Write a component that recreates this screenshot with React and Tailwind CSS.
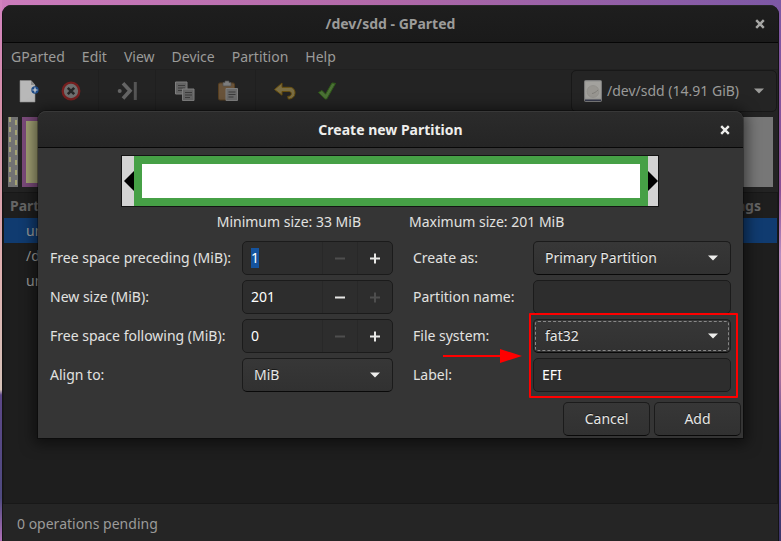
import { useEffect, useRef } from "react";

function CloseIcon() {
  return (
    <svg width="10" height="10" viewBox="0 0 10 10" fill="none" stroke="currentColor" strokeWidth="2.4">
      <path d="M1.2 1.2 8.8 8.8M8.8 1.2 1.2 8.8" />
    </svg>
  );
}

function Caret() {
  return (
    <svg width="10" height="6" viewBox="0 0 10 6" fill="currentColor">
      <path d="M0 0.5h10L5 5.5z" />
    </svg>
  );
}

function NewIcon() {
  return (
    <svg width="24" height="24" viewBox="0 0 24 24">
      <path d="M4 1.5h11l4 4.500V23H4z" fill="#b8b8b8" stroke="#8f8f8f" strokeWidth="0.6" />
      <path d="M15 1.500v4.500h4z" fill="#8d8d8d" />
      <circle cx="19" cy="11" r="3.700" fill="#1d4a86" />
      <path d="M19 8.500v5M16.500 11h5" stroke="#d5d5d5" strokeWidth="1.200" />
    </svg>
  );
}

function DeleteIcon() {
  return (
    <svg width="24" height="24" viewBox="0 0 24 24">
      <circle cx="12" cy="12" r="8.300" fill="#6f6f6f" stroke="#761f1f" strokeWidth="2.300" />
      <path d="M8.800 8.800l6.400 6.400M15.200 8.800l-6.400 6.400" stroke="#262626" strokeWidth="2.600" />
    </svg>
  );
}

function ResizeIcon() {
  return (
    <svg width="24" height="24" viewBox="0 0 24 24">
      <circle cx="3.700" cy="12" r="2" fill="#646464" />
      <path d="M7 4.200 14 11.800 7 19.500" fill="none" stroke="#646464" strokeWidth="3.600" />
      <path d="M19.300 3v18" stroke="#555" strokeWidth="3" />
    </svg>
  );
}

function CopyIcon() {
  return (
    <svg width="24" height="24" viewBox="0 0 24 24">
      <path d="M2.500 3h11.500v12H2.500z" fill="#646464" stroke="#7e7e7e" />
      <path d="M5 6.500h7M5 9h7M5 11.500h5" stroke="#3b3b3b" />
      <path d="M9.500 10h11.500v11.500H9.500z" fill="#646464" stroke="#7e7e7e" />
      <path d="M12 13.500h7M12 16h7M12 18.500h5" stroke="#3b3b3b" />
    </svg>
  );
}

function PasteIcon() {
  return (
    <svg width="24" height="24" viewBox="0 0 24 24">
      <rect x="2.500" y="4" width="16" height="17" rx="1.500" fill="#69533a" stroke="#573f20" />
      <path d="M7 3.500h2V2h4v1.500h2V7H7z" fill="#7d7d7d" stroke="#505050" strokeWidth="0.700" />
      <path d="M10 9.500h11.500v12H10z" fill="#6b6b6b" stroke="#7e7e7e" />
      <path d="M12.500 13h7M12.500 15.500h7M12.500 18h5" stroke="#3b3b3b" />
    </svg>
  );
}

function UndoIcon() {
  return (
    <svg width="24" height="24" viewBox="0 0 24 24">
      <path
        d="M1.500 10.500 9 4v4.300h7.500c3.700 0 5.700 2.700 5.500 6-.2 3.200-2.300 5.200-5.500 5.700h-1.200l-.6-2.600c2.300 0 3.600-.9 3.600-2.700 0-1.500-1-2.200-2.600-2.200H9v3.700z"
        fill="#7a6d43"
        stroke="#664d0c"
      />
    </svg>
  );
}

function ApplyIcon() {
  return (
    <svg width="24" height="24" viewBox="0 0 24 24">
      <path d="M2.500 13.500 6 11.500l3.600 3.700L16 4l3.500.4L10.700 20H9.200z" fill="#4b7136" stroke="#2f5a18" />
    </svg>
  );
}

function DiskIcon() {
  return (
    <svg width="18" height="22" viewBox="0 0 18 22">
      <rect x="0.500" y="0.500" width="17" height="21" rx="1" fill="#989895" stroke="#7b7b7b" />
      <path d="M1 19.500h16V21H1z" fill="#35384a" />
      <path d="M1.500 18.500V2h15v16.500z" fill="#a3a29e" />
      <circle cx="9" cy="11.500" r="6" fill="#989691" stroke="#8d8b86" strokeWidth="0.600" />
      <path d="M8 13.500c2-.2 4-1.500 6-3.500" stroke="#807e79" fill="none" />
    </svg>
  );
}

const tools = [
  [["New", NewIcon], ["Delete", DeleteIcon]],
  [["Resize/Move", ResizeIcon]],
  [["Copy", CopyIcon], ["Paste", PasteIcon]],
  [["Undo", UndoIcon], ["Apply", ApplyIcon]],
];

const raised =
  "rounded-[5px] border border-[#1b1b1b] border-b-[#090909] bg-linear-to-b from-[#373737] to-[#313131] text-[#e6e6e4] [text-shadow:0_-1px_#181818]";

function SpinRow({ id, label, value, canLower, canRaise, selected }) {
  const ref = useRef(null);
  useEffect(() => {
    if (selected) {
      ref.current.focus();
      ref.current.select();
    }
  }, [selected]);
  return (
    <>
      <label htmlFor={id}>{label}</label>
      <div className="flex h-[34px] overflow-hidden rounded-[5px] border border-[#1b1b1b] bg-[#2d2d2d]">
        <input
          ref={ref}
          id={id}
          defaultValue={value}
          className="w-0 flex-1 bg-transparent px-2 text-white outline-none selection:bg-[#15539e] selection:text-white"
        />
        {[["Decrease", canLower, "M0 5.500h10"], ["Increase", canRaise, "M0 5.500h10M5 0.500v10"]].map(([name, on, d]) => (
          <button
            key={name}
            aria-label={`${name} ${label}`}
            disabled={!on}
            className="grid w-[35px] place-items-center border-l border-[#282828] text-[#e8e8e6] disabled:text-[#4e4e4e]"
          >
            <svg width="10" height="11" viewBox="0 0 10 11" fill="none" stroke="currentColor" strokeWidth="2">
              <path d={d} />
            </svg>
          </button>
        ))}
      </div>
    </>
  );
}

function SelectRow({ id, label, value, focused }) {
  return (
    <>
      <label htmlFor={id}>{label}</label>
      <div className="relative">
        <select id={id} defaultValue={value} className={`h-[34px] w-full appearance-none px-[11px] outline-none ${raised}`}>
          <option>{value}</option>
        </select>
        {focused && (
          <span className="pointer-events-none absolute inset-[2px] rounded-[3px] border border-dashed border-[#888]" />
        )}
        <span className="pointer-events-none absolute inset-y-0 right-[13px] flex items-center text-[#eeeeec]">
          <Caret />
        </span>
      </div>
    </>
  );
}

function TextRow({ id, label, value }) {
  return (
    <>
      <label htmlFor={id}>{label}</label>
      <input
        id={id}
        defaultValue={value}
        className="h-[34px] w-full min-w-0 rounded-[5px] border border-[#1b1b1b] bg-[#2d2d2d] px-2 pb-[2px] text-white outline-none"
      />
    </>
  );
}

function PartitionBar() {
  return (
    <div className="mr-[84px] ml-[83px] mt-[7px] flex h-[52px] border border-[#141414] bg-[#d3d3d3] text-black">
      <div className="flex w-3 items-center justify-end">
        <svg width="10" height="20" viewBox="0 0 10 20">
          <path d="M10 0v20L0 10z" />
        </svg>
      </div>
      <div className="flex-1 border-8 border-[#46a046] bg-white" />
      <div className="flex w-[10px] items-center">
        <svg width="10" height="20" viewBox="0 0 10 20">
          <path d="M0 0v20l10-10z" />
        </svg>
      </div>
    </div>
  );
}

function CreateDialog() {
  return (
    <section
      role="dialog"
      aria-label="Create new Partition"
      className="absolute inset-x-[38px] top-[111px] rounded-t-lg bg-[#353535] text-[#e2e2e0] shadow-[0_2px_14px_4px_rgba(0,0,0,0.5),0_0_0_1px_rgba(0,0,0,0.3)]"
    >
      <header className="flex h-[37px] items-center rounded-t-lg border-t border-b border-t-[#383838] border-b-[#080808] bg-linear-to-b from-[#2b2b2b] to-[#252525] pr-[13px] pl-[23px]">
        <h2 className="flex-1 text-center text-sm font-bold text-[#eeeeec]">Create new Partition</h2>
        <button aria-label="Close dialog" className="text-[#eeeeec]">
          <CloseIcon />
        </button>
      </header>
      <PartitionBar />
      <div className="flex h-[34px] items-center justify-center gap-12 pb-1">
        <span>Minimum size: 33 MiB</span>
        <span>Maximum size: 201 MiB</span>
      </div>
      <div className="relative flex gap-5 pr-3 pl-3">
        <div className="grid flex-1 grid-cols-[minmax(0,1fr)_151px] items-center gap-x-2 gap-y-[5px]">
          <SpinRow id="before" label="Free space preceding (MiB):" value="1" canRaise selected />
          <SpinRow id="size" label="New size (MiB):" value="201" canLower />
          <SpinRow id="after" label="Free space following (MiB):" value="0" canRaise />
          <SelectRow id="align" label="Align to:" value="MiB" />
        </div>
        <div className="grid grid-cols-[112px_198px] items-center gap-x-2 gap-y-[5px]">
          <SelectRow id="kind" label="Create as:" value="Primary Partition" />
          <TextRow id="name" label="Partition name:" value="" />
          <SelectRow id="fs" label="File system:" value="fat32" focused />
          <TextRow id="label" label="Label:" value="EFI" />
        </div>
        <div className="pointer-events-none absolute right-[5px] bottom-[-6px] h-[85px] w-[209px] rounded-[1px] border-2 border-[#ff0000]" />
        <svg className="pointer-events-none absolute right-[221px] bottom-[28px]" width="79" height="16" viewBox="0 0 79 16">
          <path d="M0 8h60" stroke="#ff0000" strokeWidth="2" />
          <path d="M57 1v14l22-7z" fill="#ff0000" />
        </svg>
      </div>
      <footer className="flex justify-end gap-1 px-[2px] pt-[10px] pb-[2px]">
        <button className={`h-[34px] w-[87px] ${raised}`}>Cancel</button>
        <button className={`h-[34px] w-[87px] ${raised}`}>Add</button>
      </footer>
    </section>
  );
}

function DiskMap() {
  return (
    <div className="mx-[5px] mt-[5px] flex h-[70px] gap-1">
      <div className="flex w-[10px] justify-between bg-[#727272] px-[1px]">
        <span className="w-[2px] bg-[repeating-linear-gradient(to_bottom,#a5a474_0_5px,transparent_5px_10px)]" />
        <span className="w-[2px] bg-[repeating-linear-gradient(to_bottom,transparent_0_3px,#a5a474_3px_8px,transparent_8px_10px)]" />
      </div>
      <div className="w-[300px] border-4 border-[#7a4a7a] bg-[#a1a073]" />
      <div className="flex-1 bg-[#777]" />
    </div>
  );
}

export default function App() {
  return (
    <div className="relative min-h-screen overflow-hidden bg-linear-to-r from-[#cc7cbc] via-[#b068a8] to-[#7d58a5] px-[2px] pt-[5px] font-['Noto_Sans',sans-serif] text-sm">
      <div className="absolute inset-y-0 left-0 w-[2px] bg-[linear-gradient(to_bottom,#d282c0,#d690a8_20%,#deb0b0_50%,#d6c2b8_72%,#5c4788_73%,#4f4a80_92%,#b070b8)]" />
      <div className="absolute inset-y-0 right-0 w-[2px] bg-[linear-gradient(to_bottom,#7d58a5,#8a4f94_35%,#b88cc0_47%,#a8709c_70%,#5a4a94_82%,#3c3468)]" />
      <main className="relative flex h-[calc(100vh-5px)] flex-col overflow-hidden rounded-t-[9px] border-x border-[#131313] bg-[#232323] text-[#9b9b99]">
        <header className="flex h-[38px] shrink-0 items-center border-t border-b border-t-[#272727] border-b-[#060606] bg-linear-to-b from-[#1e1e1e] to-[#1a1a1a] pr-[13px] pl-[23px]">
          <h1 className="flex-1 text-center text-sm font-bold">/dev/sdd - GParted</h1>
          <button aria-label="Close window" className="text-[#a5a5a3]">
            <CloseIcon />
          </button>
        </header>
        <nav className="flex h-[27px] shrink-0 items-center gap-[17px] border-b border-[#202020] bg-[#252525] px-2 pt-[2px]">
          {["GParted", "Edit", "View", "Device", "Partition", "Help"].map((m) => (
            <button key={m}>{m}</button>
          ))}
        </nav>
        <div className="flex h-[42px] shrink-0 items-center pl-[3px]">
          {tools.map((group, i) => (
            <div key={i} className="flex items-center">
              {i > 0 && <span className="mx-[6px] h-[42px] w-[2px] border-l border-[#1f1f1f]" />}
              {group.map(([name, Icon]) => (
                <button key={name} aria-label={name} className="grid w-[43px] place-items-center">
                  <Icon />
                </button>
              ))}
            </div>
          ))}
          <button className="mr-px ml-auto flex h-[42px] w-[206px] items-center gap-[5px] rounded-[5px] border border-[#181818] bg-[#242424] pr-3 pl-3">
            <DiskIcon />
            <span className="flex-1 text-left">/dev/sdd (14.91 GiB)</span>
            <Caret />
          </button>
        </div>
        <DiskMap />
        <div className="mt-[5px] flex-1 border border-[#181818] bg-[#1e1e1e]">
          <table className="w-full border-collapse">
            <thead>
              <tr className="h-[25px] text-[#666]">
                <th className="pl-[6px] text-left font-bold">Partition</th>
                <th className="pr-4 text-right font-bold">Flags</th>
              </tr>
            </thead>
            <tbody>
              {["unallocated", "/dev/sdd1", "unallocated"].map((p, i) => (
                <tr key={i} className={i === 0 ? "h-[25px] bg-[#103b70]" : "h-[25px]"}>
                  <td className="pl-[22px]">{p}</td>
                  <td />
                </tr>
              ))}
            </tbody>
          </table>
        </div>
        <footer className="flex h-[37px] shrink-0 items-center bg-[#252525] px-[14px] pt-[2px]">0 operations pending</footer>
      </main>
      <CreateDialog />
    </div>
  );
}
